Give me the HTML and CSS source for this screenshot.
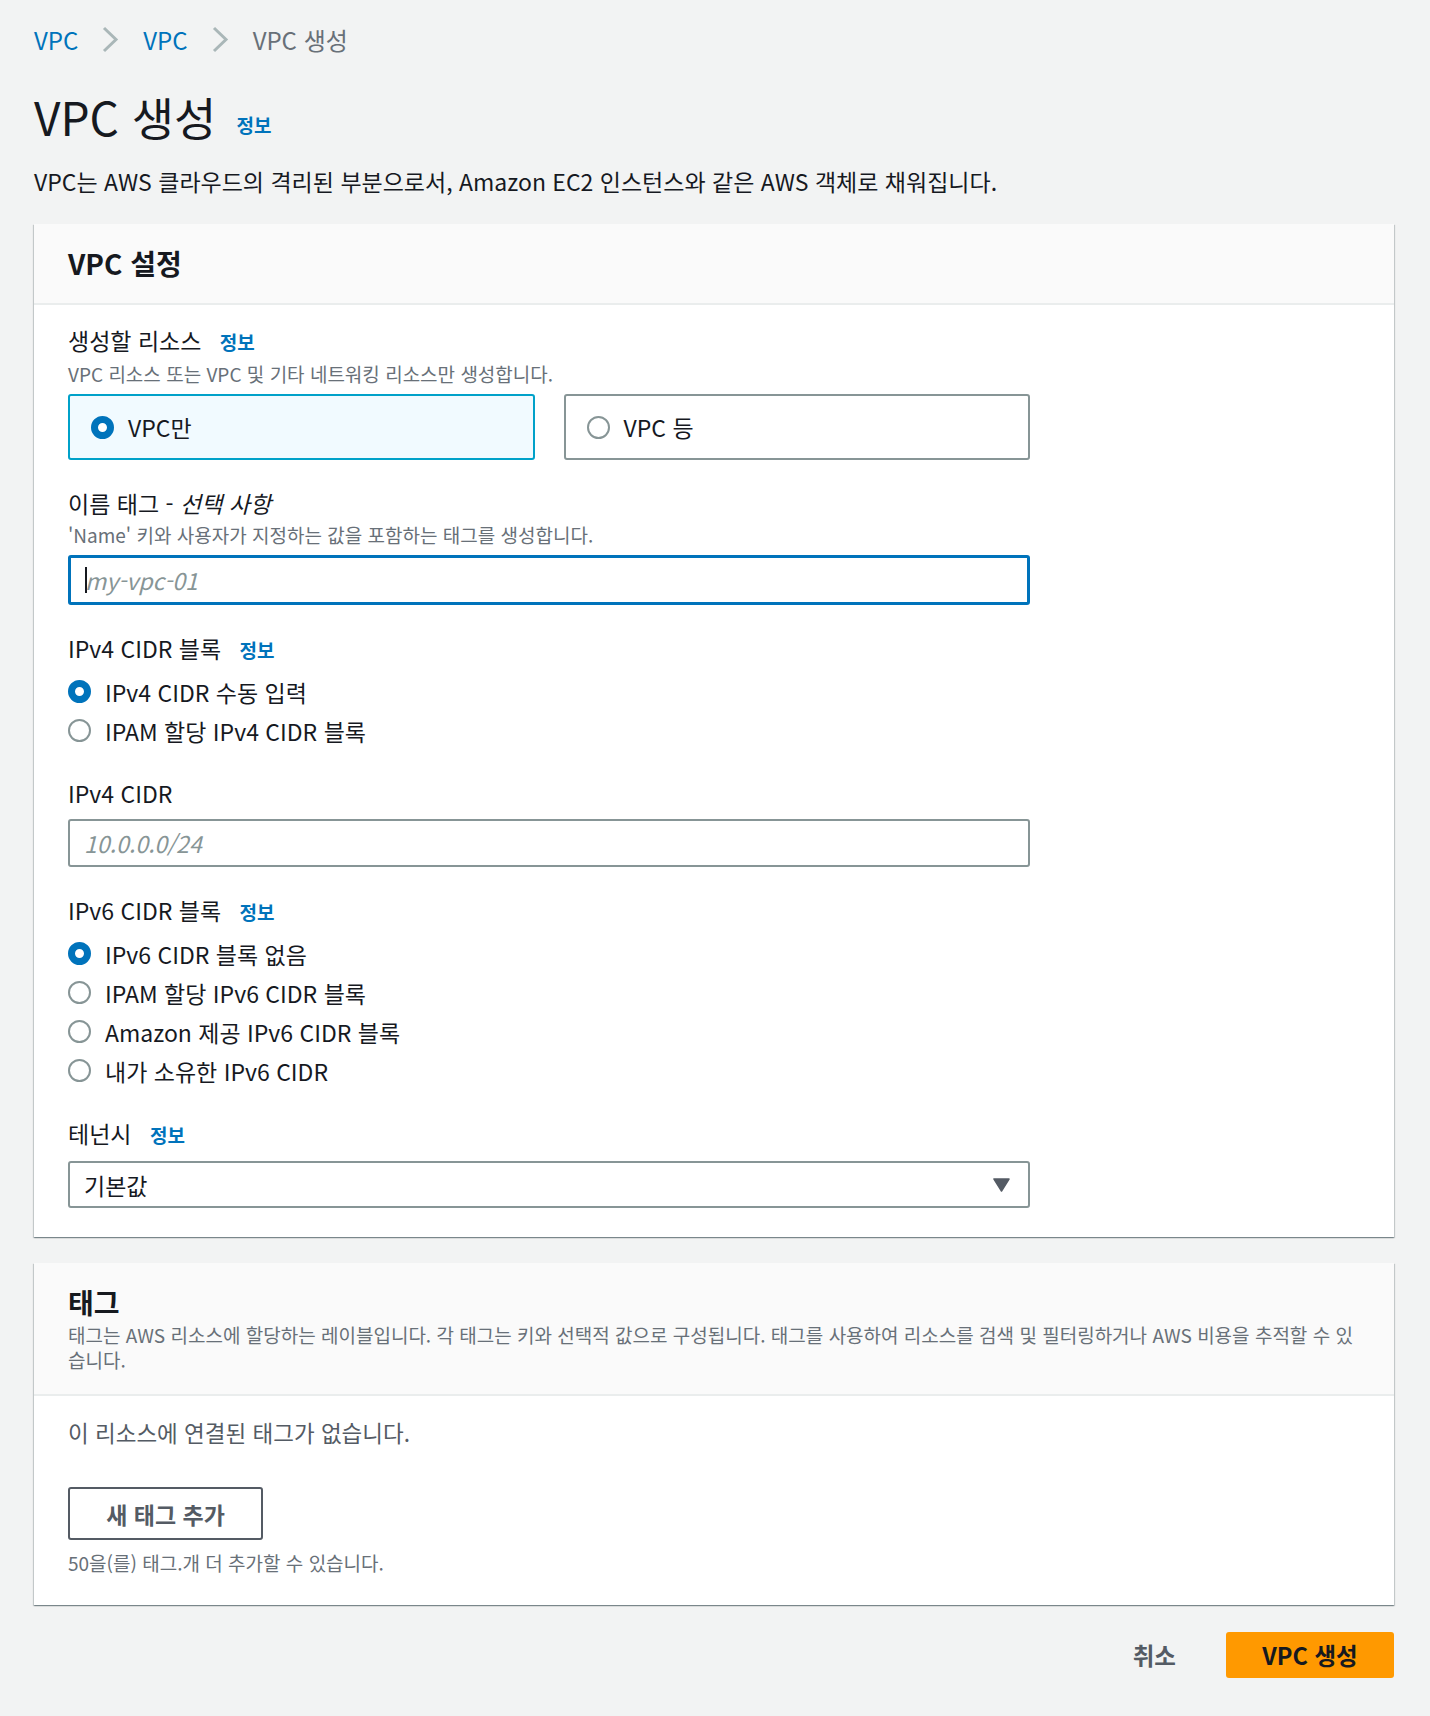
FILE: index.html
```html
<!DOCTYPE html>
<html lang="ko">

<head>
    <meta charset="UTF-8">
    <meta name="viewport" content="width=device-width, initial-scale=1.0">
    <title>VPC 생성</title>
    <link rel="stylesheet" href="styles.css">
</head>

<body>
    <nav class="crumbs">
        <a href="#">VPC</a>
        <svg class="sep" width="17" height="27" viewBox="0 0 17 27"><path d="M2 2l12 11.5L2 25" fill="none" stroke="#aab7b8" stroke-width="3"/></svg>
        <a href="#">VPC</a>
        <svg class="sep" width="17" height="27" viewBox="0 0 17 27"><path d="M2 2l12 11.5L2 25" fill="none" stroke="#aab7b8" stroke-width="3"/></svg>
        <span class="current">VPC 생성</span>
    </nav>

    <div class="page-head">
        <h1>VPC 생성</h1>
        <a class="info big" href="#">정보</a>
    </div>
    <p class="lead">VPC는 AWS 클라우드의 격리된 부분으로서, Amazon EC2 인스턴스와 같은 AWS 객체로 채워집니다.</p>

    <!-- VPC 설정 -->
    <section class="card">
        <div class="card-head">
            <h2>VPC 설정</h2>
        </div>
        <div class="card-body form">
            <div class="field first">
                <div class="label">생성할 리소스 <a class="info" href="#">정보</a></div>
                <div class="hint">VPC 리소스 또는 VPC 및 기타 네트워킹 리소스만 생성합니다.</div>
                <div class="tiles">
                    <div class="tile on"><span class="radio on"></span>VPC만</div>
                    <div class="tile"><span class="radio"></span>VPC 등</div>
                </div>
            </div>

            <div class="field">
                <div class="label">이름 태그 - <i>선택 사항</i></div>
                <div class="hint">'Name' 키와 사용자가 지정하는 값을 포함하는 태그를 생성합니다.</div>
                <div class="input focus"><span class="caret"></span><span class="ph">my-vpc-01</span></div>
            </div>

            <div class="field">
                <div class="label">IPv4 CIDR 블록 <a class="info" href="#">정보</a></div>
                <div class="options">
                    <div class="opt"><span class="radio on"></span>IPv4 CIDR 수동 입력</div>
                    <div class="opt"><span class="radio"></span>IPAM 할당 IPv4 CIDR 블록</div>
                </div>
            </div>

            <div class="field">
                <div class="label">IPv4 CIDR</div>
                <div class="input plain"><span class="ph">10.0.0.0/24</span></div>
            </div>

            <div class="field">
                <div class="label">IPv6 CIDR 블록 <a class="info" href="#">정보</a></div>
                <div class="options">
                    <div class="opt"><span class="radio on"></span>IPv6 CIDR 블록 없음</div>
                    <div class="opt"><span class="radio"></span>IPAM 할당 IPv6 CIDR 블록</div>
                    <div class="opt"><span class="radio"></span>Amazon 제공 IPv6 CIDR 블록</div>
                    <div class="opt"><span class="radio"></span>내가 소유한 IPv6 CIDR</div>
                </div>
            </div>

            <div class="field">
                <div class="label">테넌시 <a class="info" href="#">정보</a></div>
                <div class="select">
                    <span>기본값</span>
                    <svg width="17" height="14" viewBox="0 0 17 14"><path d="M1 1h15L8.5 13z" fill="#545b64" stroke="#545b64" stroke-width="1.5" stroke-linejoin="round"/></svg>
                </div>
            </div>
        </div>
    </section>

    <!-- 태그 -->
    <section class="card tags">
        <div class="card-head">
            <h2>태그</h2>
            <div class="hint wide">태그는 AWS 리소스에 할당하는 레이블입니다. 각 태그는 키와 선택적 값으로 구성됩니다. 태그를 사용하여 리소스를 검색 및 필터링하거나 AWS 비용을 추적할 수 있습니다.</div>
        </div>
        <div class="card-body">
            <div class="empty">이 리소스에 연결된 태그가 없습니다.</div>
            <button class="btn">새 태그 추가</button>
            <div class="hint small">50을(를) 태그.개 더 추가할 수 있습니다.</div>
        </div>
    </section>

    <div class="actions">
        <button class="link-btn">취소</button>
        <button class="primary">VPC 생성</button>
    </div>
</body>

</html>
```

FILE: styles.css
```css
* {
    margin: 0;
    padding: 0;
    box-sizing: border-box;
}

body {
    background-color: #f2f3f3;
    color: #16191f;
    font-family: "Noto Sans CJK KR", "Noto Sans", sans-serif;
    padding: 0 36px 37px 34px;
}

a {
    text-decoration: none;
}

/* breadcrumbs */
.crumbs {
    display: flex;
    align-items: center;
    height: 80px;
    font-size: 24px;
    padding-bottom: 2px;
}

.crumbs a {
    color: #0073bb;
}

.crumbs .current {
    color: #687078;
}

.crumbs .sep {
    margin: 0 24px 0 24px;
}

/* title */
.page-head {
    display: flex;
    align-items: center;
    margin-top: 6px;
}

h1 {
    font-size: 46px;
    font-weight: 400;
    line-height: 60px;
}

.info {
    color: #0073bb;
    font-weight: 700;
    font-size: 19px;
}

.info.big {
    margin: 16px 0 0 20px;
}

.lead {
    font-size: 23px;
    line-height: 30px;
    margin-top: 20px;
}

/* cards */
.card {
    background: #fff;
    margin-top: 28px;
    box-shadow: 0 1px 1px 0 rgba(0, 28, 36, 0.3), 1px 1px 1px 0 rgba(0, 28, 36, 0.15), -1px 1px 1px 0 rgba(0, 28, 36, 0.15);
}

.card-head {
    background: #fafafa;
    border-bottom: 2px solid #eaeded;
    height: 81px;
    padding: 21px 34px 0;
}

h2 {
    font-size: 28px;
    font-weight: 700;
    line-height: 36px;
}

.card-body {
    padding: 21px 34px 29px;
}

.form .field {
    width: 962px;
    margin-top: 29px;
}

.form .field.first {
    margin-top: 0;
}

.label {
    font-size: 23px;
    line-height: 28px;
}

.label .info {
    margin-left: 12px;
}

.label i {
    font-style: italic;
}

.hint {
    color: #687078;
    font-size: 19px;
    line-height: 24px;
    margin-top: 6px;
}

.tiles {
    display: flex;
    gap: 29px;
    margin-top: 8px;
}

.tile {
    flex: 1;
    height: 66px;
    border: 2px solid #879596;
    border-radius: 3px;
    display: flex;
    align-items: center;
    padding-left: 21px;
    font-size: 23px;
}

.tile.on {
    border-color: #00a1c9;
    background: #f1faff;
}

.radio {
    width: 23px;
    height: 23px;
    border-radius: 50%;
    border: 2px solid #879596;
    background: #fff;
    margin-right: 14px;
    flex-shrink: 0;
}

.radio.on {
    border: 7px solid #0073bb;
}

.input,
.select {
    height: 47px;
    border: 2px solid #879596;
    border-radius: 3px;
    display: flex;
    align-items: center;
    padding: 0 14px;
    font-size: 23px;
    margin-top: 10px;
}

.input.plain {
    height: 48px;
    margin-top: 12px;
}

.input.focus {
    height: 50px;
    border: 3px solid #0073bb;
    margin-top: 8px;
}

.ph {
    color: #879596;
    font-style: italic;
}

.caret {
    width: 2px;
    height: 26px;
    background: #16191f;
    margin-right: -2px;
}

.options {
    margin-top: 8px;
}

.opt {
    height: 39px;
    display: flex;
    align-items: center;
    font-size: 23px;
}

.select {
    justify-content: space-between;
    padding-right: 18px;
    margin-top: 12px;
}

/* tags card */
.tags {
    margin-top: 26px;
}

.tags .card-head {
    height: 133px;
    padding-top: 21px;
}

.hint.wide {
    line-height: 25px;
    margin-top: 2px;
}

.tags .card-body {
    padding-top: 22px;
    padding-bottom: 30px;
}

.empty {
    color: #545b64;
    font-size: 22.5px;
    line-height: 28px;
}

.btn {
    display: block;
    margin-top: 41px;
    width: 195px;
    height: 53px;
    border: 2px solid #545b64;
    border-radius: 3px;
    background: #fff;
    color: #545b64;
    font-family: inherit;
    font-size: 23px;
    font-weight: 700;
}

.hint.small {
    margin-top: 11px;
}

/* actions */
.actions {
    display: flex;
    justify-content: flex-end;
    align-items: center;
    gap: 30px;
    margin-top: 27px;
}

.actions button {
    font-family: inherit;
    font-size: 23.5px;
    font-weight: 700;
    border: none;
    height: 46px;
}

.link-btn {
    background: none;
    color: #545b64;
    padding: 0 20px;
}

.primary {
    background: #ff9900;
    color: #16191f;
    border-radius: 3px;
    width: 168px;
}
```
